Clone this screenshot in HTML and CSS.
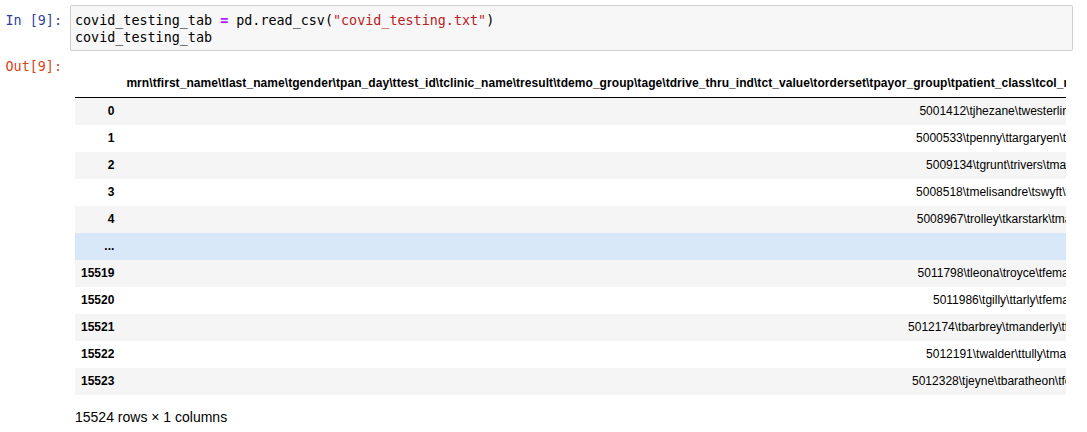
FILE: index.html
```html
<!DOCTYPE html>
<html>
<head>
<meta charset="utf-8">
<link rel="stylesheet" href="styles.css">
</head>
<body>
<div class="cell">
  <div class="input">
    <div class="prompt prompt-in">In&nbsp;[9]:</div>
    <div class="input-area">
<pre class="code">covid_testing_tab <span class="op">=</span> pd.read_csv(<span class="str">"covid_testing.txt"</span>)
covid_testing_tab</pre>
    </div>
  </div>
  <div class="output">
    <div class="prompt prompt-out">Out[9]:</div>
    <div class="output-subarea">
      <div class="scroll">
        <table class="dataframe">
          <thead>
            <tr>
              <th></th>
              <th class="colname">mrn\tfirst_name\tlast_name\tgender\tpan_day\ttest_id\tclinic_name\tresult\tdemo_group\tage\tdrive_thru_ind\tct_value\torderset\tpayor_group\tpatient_class\tcol_rec_tat\trec_ver_tat</th>
            </tr>
          </thead>
          <tbody>
            <tr class="odd"><th>0</th><td>5001412\tjhezane\twesterling\tmale\t4\tcovid\ti...</td></tr>
            <tr><th>1</th><td>5000533\tpenny\ttargaryen\tfemale\t4\tcovid\tcl...</td></tr>
            <tr class="odd"><th>2</th><td>5009134\tgrunt\trivers\tmale\t5\tcovid\tinpatie...</td></tr>
            <tr><th>3</th><td>5008518\tmelisandre\tswyft\tfemale\t9\tcovid\tc...</td></tr>
            <tr class="odd"><th>4</th><td>5008967\trolley\tkarstark\tmale\t21\tcovid\teme...</td></tr>
            <tr class="hover"><th>...</th><td>...</td></tr>
            <tr class="odd"><th>15519</th><td>5011798\tleona\troyce\tfemale\t86\tcovid\tinpat...</td></tr>
            <tr><th>15520</th><td>5011986\tgilly\ttarly\tfemale\t33\tcovid\tinpat...</td></tr>
            <tr class="odd"><th>15521</th><td>5012174\tbarbrey\tmanderly\tfemale\t100\tcovid\...</td></tr>
            <tr><th>15522</th><td>5012191\twalder\ttully\tmale\t7\tcovid\tinpatie...</td></tr>
            <tr class="odd"><th>15523</th><td>5012328\tjeyne\tbaratheon\tfemale\t100\tcovid\t...</td></tr>
          </tbody>
        </table>
      </div>
      <p class="shape">15524 rows × 1 columns</p>
    </div>
  </div>
</div>
</body>
</html>
```
FILE: styles.css
```css
html, body {
  margin: 0;
  padding: 0;
  background: #ffffff;
}

body {
  font-family: "Liberation Sans", Arial, Helvetica, sans-serif;
  font-size: 14px;
  color: #000000;
}

.cell {
  padding-top: 5px;
}

.input,
.output {
  display: flex;
  align-items: flex-start;
}

.prompt {
  flex: 0 0 auto;
  width: 62px;
  padding-right: 8px;
  text-align: right;
  font-family: "DejaVu Sans Mono", "Liberation Mono", monospace;
  font-size: 13.4px;
  line-height: 17px;
  white-space: nowrap;
}

.prompt-in {
  color: #303f9f;
  padding-top: 7px;
}

.prompt-out {
  color: #d84315;
  padding-top: 7px;
}

.input-area {
  flex: 1 1 auto;
  margin-right: 14px;
  background: #f7f7f7;
  border: 1px solid #cfcfcf;
  border-radius: 2px;
}

.code {
  margin: 0;
  padding: 6px 4px 4px 4px;
  font-family: "DejaVu Sans Mono", "Liberation Mono", monospace;
  font-size: 13.4px;
  line-height: 17px;
  color: #000000;
}

.op {
  color: #aa22ff;
  font-weight: bold;
}

.str {
  color: #ba2121;
}

.output-subarea {
  flex: 1 1 auto;
  min-width: 0;
  padding-left: 5px;
  margin-right: 21px;
  padding-top: 19px;
}

.scroll {
  overflow: hidden;
}

.dataframe {
  border-collapse: collapse;
  border-spacing: 0;
  font-family: "Liberation Sans", Arial, Helvetica, sans-serif;
  font-size: 12px;
  color: #000000;
}

.dataframe th,
.dataframe td {
  padding: 6px;
  line-height: 15px;
  text-align: right;
  vertical-align: middle;
  white-space: nowrap;
}

.dataframe thead th {
  font-weight: bold;
  border-bottom: 1px solid #000000;
}

.dataframe .colname {
  letter-spacing: 0.064px;
}

.dataframe tbody th {
  font-weight: bold;
}

.dataframe tbody tr.odd {
  background: #f5f5f5;
}

.dataframe tbody tr.hover {
  background: #d9e8f8;
}

.shape {
  margin: 14px 0 0 0;
  font-size: 14px;
  line-height: 17px;
}
```
